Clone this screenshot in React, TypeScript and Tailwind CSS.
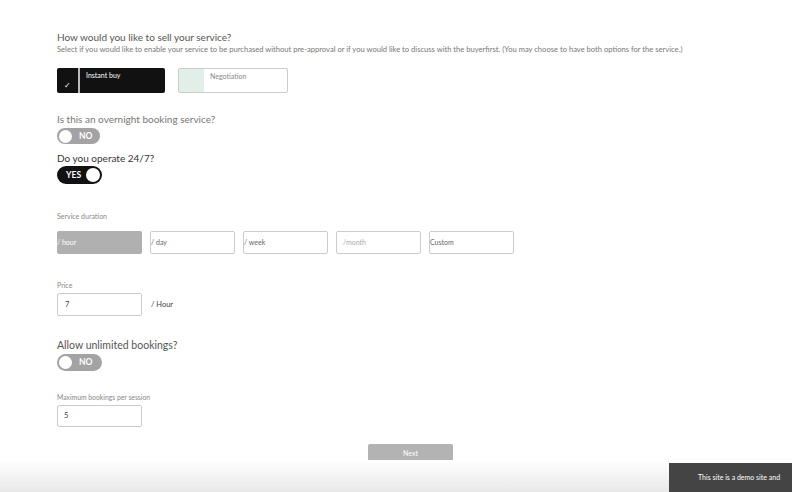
import React from "react";

const font = { fontFamily: "Lato, 'Open Sans', sans-serif" };

function Toggle({ on, w, h }: { on: boolean; w: string; h: string }) {
  return (
    <div
      className={`flex items-center rounded-full ${w} ${h} ${on ? "bg-[#111] justify-end pr-[2px] pl-[9px]" : "bg-[#a3a3a3] pl-[2px]"}`}
    >
      {on ? (
        <>
          <span className="text-[8.5px] font-bold text-white mr-auto leading-none">YES</span>
          <span className="w-[14px] h-[14px] rounded-full bg-white" />
        </>
      ) : (
        <>
          <span className="w-[13px] h-[13px] rounded-full bg-white" />
          <span className="text-[8.5px] font-bold text-white ml-[7px] leading-none">NO</span>
        </>
      )}
    </div>
  );
}

export default function App() {
  const durations = ["/ hour", "/ day", "/ week", "/month", "Custom"];
  return (
    <div className="relative w-[792px] h-[492px] overflow-hidden bg-white" style={font}>
      <div className="pl-[57px] pt-[30px]">
        <div className="text-[10px] leading-[14px] text-[#555]">How would you like to sell your service?</div>
        <div className="text-[7.6px] leading-[9px] mt-[1px] text-[#777] whitespace-nowrap">
          Select if you would like to enable your service to be purchased without pre-approval or if you would like to discuss with the buyerfirst. (You may choose to have both options for the service.)
        </div>
        <div className="flex gap-[13px] mt-[14px]">
          <div className="flex w-[108px] h-[25px] bg-[#111] rounded-[2px]">
            <div className="w-[23px] flex items-end justify-center pb-[4px] border-r-2 border-[#bbb]">
              <span className="text-white text-[8px] leading-none">✓</span>
            </div>
            <span className="text-white text-[7px] pl-[6px] pt-[4px] leading-none">Instant buy</span>
          </div>
          <div className="flex w-[110px] h-[25px] border border-[#ccc] rounded-[2px] bg-white">
            <div className="w-[25px] bg-[#e2efe9]" />
            <span className="text-[#888] text-[7px] pl-[6px] pt-[4px] leading-none">Negotiation</span>
          </div>
        </div>
        <div className="text-[10px] leading-[12px] text-[#777] mt-[20px]">Is this an overnight booking service?</div>
        <div className="mt-[3px]">
          <Toggle on={false} w="w-[43px]" h="h-[16px]" />
        </div>
        <div className="text-[10px] leading-[12px] text-[#333] mt-[8px]">Do you operate 24/7?</div>
        <div className="mt-[2px]">
          <Toggle on={true} w="w-[45px]" h="h-[18px]" />
        </div>
        <div className="text-[7px] leading-[9px] text-[#888] mt-[28px]">Service duration</div>
        <div className="flex gap-[8px] mt-[10px]">
          {durations.map((d, i) => (
            <div
              key={d}
              className={`w-[85px] h-[23px] rounded-[2px] flex items-center text-[7px] ${
                i === 0 ? "bg-[#b0b0b0] text-white" : "border border-[#ccc] text-[#666]"
              } ${i === 3 ? "pl-[6px] text-[#aaa]" : ""}`}
            >
              {d}
            </div>
          ))}
        </div>
        <div className="text-[7px] leading-[9px] text-[#888] mt-[27px]">Price</div>
        <div className="flex items-center mt-[3px]">
          <div className="w-[85px] h-[23px] border border-[#ccc] rounded-[2px] flex items-center pl-[7px] text-[7.5px] text-[#444]">7</div>
          <span className="ml-[9px] text-[7.5px] text-[#444]">/ Hour</span>
        </div>
        <div className="text-[10.5px] leading-[12px] text-[#555] mt-[23px]">Allow unlimited bookings?</div>
        <div className="mt-[3px]">
          <Toggle on={false} w="w-[45px]" h="h-[17px]" />
        </div>
        <div className="text-[6.8px] leading-[9px] text-[#888] mt-[22px]">Maximum bookings per session</div>
        <div className="w-[85px] h-[22px] border border-[#ccc] rounded-[2px] flex items-center pl-[6px] text-[7.5px] text-[#444] mt-[3px]">5</div>
        <div className="flex mt-[17px] pl-[311px]">
          <div className="w-[85px] h-[19px] bg-[#b3b3b3] rounded-[2px] flex items-center justify-center text-white text-[7px]">Next</div>
        </div>
      </div>
      <div className="absolute left-0 right-0 bottom-0 h-[32px] bg-gradient-to-b from-white to-[#e8e8e8]" />
      <div className="absolute right-0 bottom-0 w-[123px] h-[29px] bg-[#444] flex items-center pl-[29px] text-white text-[7px] whitespace-nowrap">
        This site is a demo site and
      </div>
    </div>
  );
}
